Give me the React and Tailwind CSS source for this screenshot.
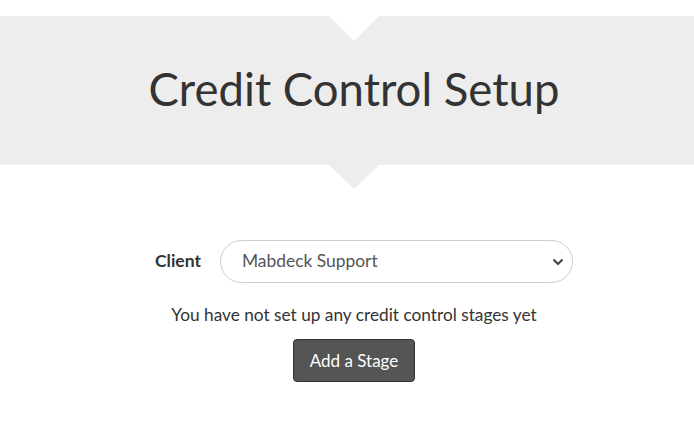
import React from 'react';

const Banner = () => (
  <div className="relative mt-4 h-[149px] bg-[#ededed] flex items-center justify-center">
    <div className="absolute left-1/2 top-0 -translate-x-1/2 w-0 h-0 border-x-[25px] border-x-transparent border-t-[25px] border-t-white" />
    <h1 className="text-[45.5px] leading-none text-[#333] pb-[4px]">Credit Control Setup</h1>
    <div className="absolute left-1/2 top-full -translate-x-1/2 w-0 h-0 border-x-[25px] border-x-transparent border-t-[24px] border-t-[#ededed]" />
  </div>
);

const App = () => (
  <div className="w-[694px] h-[432px] bg-white font-['Lato',sans-serif] overflow-hidden">
    <div className="w-[708px]">
      <Banner />
      <div className="flex flex-col items-center pt-[75px]">
        <div className="flex items-center gap-[19px] pl-[20px]">
          <label className="text-[17.5px] font-bold text-[#333]">Client</label>
          <div className="relative">
            <select
              defaultValue="mabdeck"
              className="appearance-none w-[353px] h-[43px] rounded-full border border-[#ccc] bg-white pl-[21px] pr-10 text-[17.4px] text-[#555] font-['Lato',sans-serif] outline-none"
            >
              <option value="mabdeck">Mabdeck Support</option>
            </select>
            <svg className="pointer-events-none absolute right-[9px] top-1/2 -translate-y-1/2" width="12" height="8" viewBox="0 0 12 8">
              <path d="M1.5 1.5 L6 6 L10.5 1.5" fill="none" stroke="#444" strokeWidth="2" />
            </svg>
          </div>
        </div>
        <p className="mt-[19px] text-[17.25px] text-[#333]">You have not set up any credit control stages yet</p>
        <button className="mt-[11px] w-[122px] h-[43px] rounded-[4px] bg-[#555] border border-[#333] text-white text-[17px]">
          Add a Stage
        </button>
      </div>
    </div>
  </div>
);

export default App;
